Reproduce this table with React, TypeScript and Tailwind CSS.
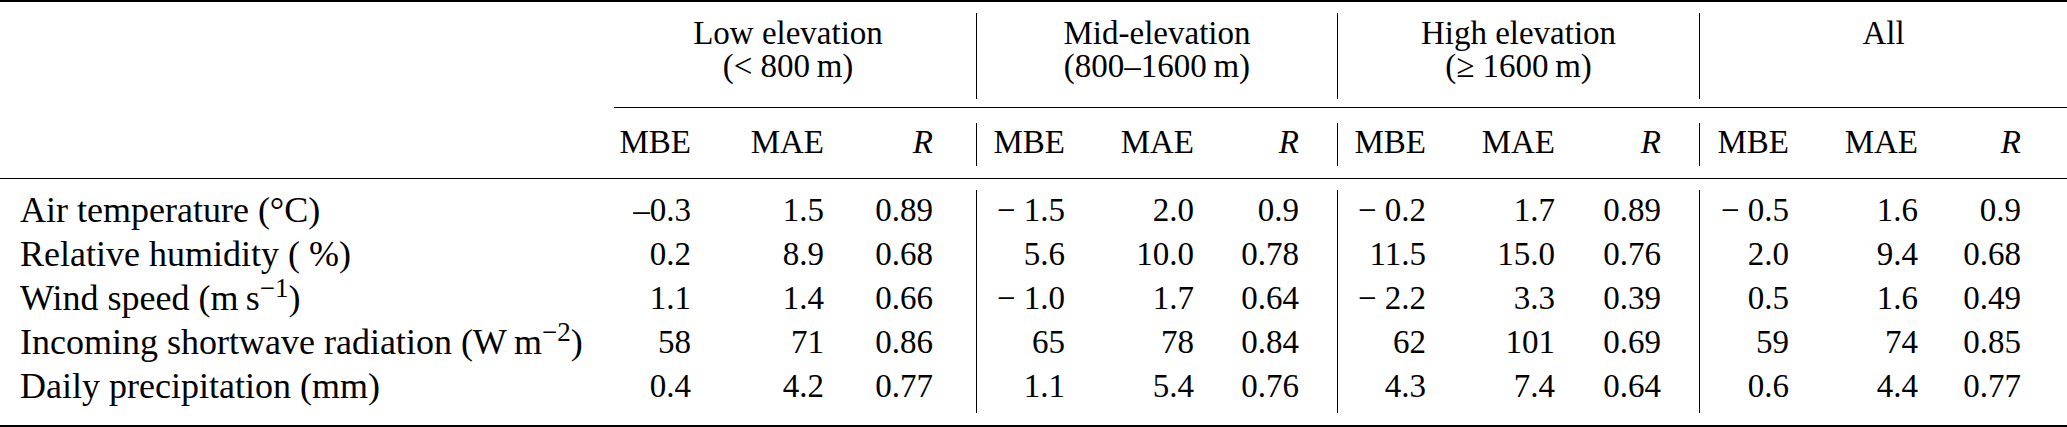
import type { ReactNode } from "react";

type Group = {
  title: string;
  sub: string;
  width: string;
  cols: string;
};

const groups: Group[] = [
  { title: "Low elevation", sub: "(< 800\u2009m)", width: "w-[376px]", cols: "grid-cols-[91px_133px_109px]" },
  { title: "Mid-elevation", sub: "(800–1600\u2009m)", width: "w-[360px]", cols: "grid-cols-[88px_129px_105px]" },
  { title: "High elevation", sub: "(≥ 1600\u2009m)", width: "w-[361px]", cols: "grid-cols-[88px_129px_106px]" },
  { title: "All", sub: "", width: "w-[367px]", cols: "grid-cols-[89px_129px_103px]" },
];

type Row = { label: ReactNode; vals: string[][] };

const rows: Row[] = [
  {
    label: "Air temperature (°C)",
    vals: [
      ["–0.3", "1.5", "0.89"],
      ["− 1.5", "2.0", "0.9"],
      ["− 0.2", "1.7", "0.89"],
      ["− 0.5", "1.6", "0.9"],
    ],
  },
  {
    label: <>Relative humidity ({"\u2005"}%)</>,
    vals: [
      ["0.2", "8.9", "0.68"],
      ["5.6", "10.0", "0.78"],
      ["11.5", "15.0", "0.76"],
      ["2.0", "9.4", "0.68"],
    ],
  },
  {
    label: (
      <>
        Wind speed (m{"\u2009"}s<sup>−1</sup>)
      </>
    ),
    vals: [
      ["1.1", "1.4", "0.66"],
      ["− 1.0", "1.7", "0.64"],
      ["− 2.2", "3.3", "0.39"],
      ["0.5", "1.6", "0.49"],
    ],
  },
  {
    label: (
      <>
        Incoming shortwave radiation (W{"\u2009"}m<sup>−2</sup>)
      </>
    ),
    vals: [
      ["58", "71", "0.86"],
      ["65", "78", "0.84"],
      ["62", "101", "0.69"],
      ["59", "74", "0.85"],
    ],
  },
  {
    label: "Daily precipitation (mm)",
    vals: [
      ["0.4", "4.2", "0.77"],
      ["1.1", "5.4", "0.76"],
      ["4.3", "7.4", "0.64"],
      ["0.6", "4.4", "0.77"],
    ],
  },
];

function Sep({ className }: { className: string }) {
  return <div className={`w-px shrink-0 bg-black ${className}`} />;
}

export default function App() {
  return (
    <div className="h-[427px] w-[2067px] bg-white font-['Liberation_Serif',serif] text-[33px] text-black">
      <div className="h-[2px] bg-black" />

      {/* group titles */}
      <div className="flex h-[105px]">
        <div className="w-[600px] shrink-0" />
        {groups.map((g, i) => (
          <div key={g.title} className="flex">
            <div className={`${g.width} pt-[15px] text-center leading-[33px] whitespace-nowrap`}>
              <div>{g.title}</div>
              {g.sub ? <div>{g.sub}</div> : null}
            </div>
            {i < groups.length - 1 ? <Sep className="mt-[11px] mb-[8px]" /> : null}
          </div>
        ))}
      </div>
      <div className="ml-[614px] h-px bg-black" />

      {/* column names */}
      <div className="flex h-[70px]">
        <div className="w-[600px] shrink-0" />
        {groups.map((g, i) => (
          <div key={g.title} className="flex">
            <div className={`${g.width} pt-[18px] leading-[33px]`}>
              <div className={`grid ${g.cols} text-right`}>
                <span>MBE</span>
                <span>MAE</span>
                <span className="italic">R</span>
              </div>
            </div>
            {i < groups.length - 1 ? <Sep className="mt-[15px] mb-[12px]" /> : null}
          </div>
        ))}
      </div>
      <div className="h-px bg-black" />

      {/* body */}
      <div className="flex h-[246px]">
        <div className="w-[600px] shrink-0 pt-[9px] pl-[20px] text-[36px] leading-[44px]">
          {rows.map((r, k) => (
            <div key={k} className="h-[44px] whitespace-nowrap">
              {r.label}
            </div>
          ))}
        </div>
        {groups.map((g, i) => (
          <div key={g.title} className="flex">
            <div className={`${g.width} pt-[9px] leading-[44px]`}>
              {rows.map((r, k) => (
                <div key={k} className={`grid h-[44px] ${g.cols} text-right whitespace-nowrap`}>
                  {r.vals[i].map((v, j) => (
                    <span key={j}>{v}</span>
                  ))}
                </div>
              ))}
            </div>
            {i < groups.length - 1 ? <Sep className="mt-[11px] mb-[12px]" /> : null}
          </div>
        ))}
      </div>
      <div className="h-[2px] bg-black" />
    </div>
  );
}
